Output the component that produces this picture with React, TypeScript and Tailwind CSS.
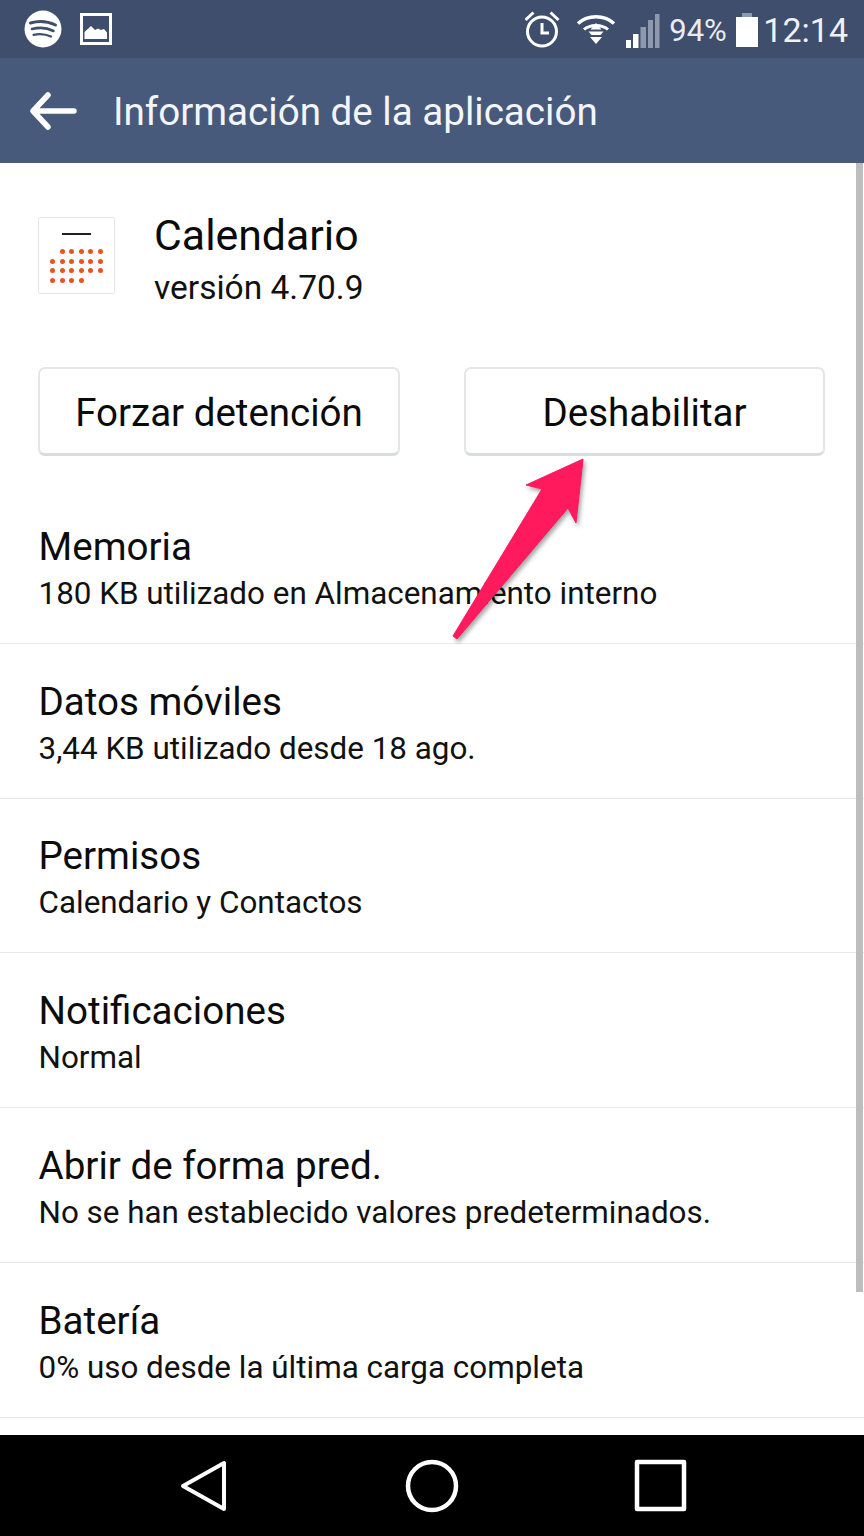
const ROBOTO = "font-['Roboto',sans-serif]";

const rows = [
  { title: "Memoria", sub: "180 KB utilizado en Almacenamiento interno" },
  { title: "Datos móviles", sub: "3,44 KB utilizado desde 18 ago." },
  { title: "Permisos", sub: "Calendario y Contactos" },
  { title: "Notificaciones", sub: "Normal" },
  { title: "Abrir de forma pred.", sub: "No se han establecido valores predeterminados." },
  { title: "Batería", sub: "0% uso desde la última carga completa" },
];

const dotRows = [
  [0, 1, 1, 1, 1, 1],
  [1, 1, 1, 1, 1, 1],
  [1, 1, 1, 1, 1, 1],
  [1, 1, 1, 1, 0, 0],
];

function SpotifyGlyph() {
  return (
    <svg width="38" height="38" viewBox="0 0 38 38">
      <circle cx="19" cy="19" r="18.5" fill="#fff" />
      <g fill="none" stroke="#3f4e6c" strokeLinecap="round">
        <path d="M6.5 13c8-2.4 17-1.8 25 2" strokeWidth="3" />
        <path d="M8 19c7-1.8 15-1.3 21.5 2" strokeWidth="2.6" />
        <path d="M9.5 24.8c6-1.3 12-.9 17.5 1.8" strokeWidth="2.2" />
      </g>
    </svg>
  );
}

function PictureGlyph() {
  return (
    <svg width="32" height="32" viewBox="0 0 32 32">
      <rect x="1.5" y="1.5" width="29" height="29" fill="none" stroke="#fff" strokeWidth="3" />
      <path d="M4.5 26v-7l6.5-6 4 4 3-1.5 3 1.5 3-1 3 3.5V26z" fill="#fff" />
    </svg>
  );
}

function AlarmGlyph() {
  return (
    <svg width="38" height="38" viewBox="0 0 38 38" fill="none" stroke="#fff">
      <circle cx="17" cy="21.5" r="14.5" strokeWidth="3" />
      <path d="M17 13v10h7" strokeWidth="3" />
      <path d="M0.5 10l8-7.5M33.5 10l-8-7.5" strokeWidth="3" />
    </svg>
  );
}

function WifiGlyph() {
  return (
    <svg width="40" height="30" viewBox="0 0 40 30" fill="none" stroke="#fff">
      <path d="M2 9.5C12 0.5 28 0.5 38 9.5" strokeWidth="3.5" />
      <path d="M8 15.5c6-5.5 18-5.5 24 0" strokeWidth="3" />
      <g fill="#fff" stroke="none">
        <path d="M20 9l5.5 6.5h-11z" />
        <path d="M12.5 17.5h15l-3 3.5h-9z" />
        <path d="M14 23h12l-6 7z" />
      </g>
    </svg>
  );
}

function SignalGlyph() {
  return (
    <svg width="34" height="34" viewBox="0 0 34 34">
      <rect x="0" y="26" width="5" height="8" fill="#fff" />
      <rect x="7" y="20" width="5.5" height="14" fill="#fff" />
      <rect x="14.5" y="13" width="5.5" height="21" fill="#8f99ad" />
      <rect x="22" y="6" width="5" height="28" fill="#8f99ad" />
      <rect x="29" y="0" width="4.5" height="34" fill="#8f99ad" />
    </svg>
  );
}

function BatteryGlyph() {
  return (
    <svg width="22" height="34" viewBox="0 0 22 34">
      <rect x="6" y="0" width="10" height="4" fill="#8f99ad" />
      <rect x="0" y="4" width="22" height="30" fill="#fff" />
    </svg>
  );
}

function CalendarIcon() {
  return (
    <div className="w-[77px] h-[77px] bg-white border border-[#e6e6e6] rounded-[2px] flex flex-col items-center shrink-0">
      <div className="w-[29px] h-[2px] bg-[#222] mt-[15px] mb-[14px]" />
      <div className="flex flex-col gap-[4.5px]">
        {dotRows.map((row, r) => (
          <div key={r} className="flex gap-[4.5px]">
            {row.map((on, c) => (
              <span key={c} className={on ? "w-[5px] h-[5px] rounded-full bg-[#e8541e]" : "w-[5px] h-[5px]"} />
            ))}
          </div>
        ))}
      </div>
    </div>
  );
}

function ActionButton({ label, className }: { label: string; className: string }) {
  return (
    <div
      className={`h-[89px] pt-[4px] rounded-[7px] border-2 border-[#e4e5e5] border-b-[3px] border-b-[#dadbdb] bg-white flex items-center justify-center text-[38.5px] text-[#0a0a0a] ${className}`}
    >
      {label}
    </div>
  );
}

export default function App() {
  return (
    <div className={`relative w-[864px] h-[1536px] overflow-hidden bg-white flex flex-col ${ROBOTO}`}>
      <div className="h-[58px] bg-[#3f4e6c] flex items-center pl-[24px] pr-[16px] text-white shrink-0">
        <SpotifyGlyph />
        <div className="ml-[18px]">
          <PictureGlyph />
        </div>
        <div className="ml-auto flex items-center">
          <AlarmGlyph />
          <div className="ml-[13px]">
            <WifiGlyph />
          </div>
          <div className="ml-[10px] mt-[4px]">
            <SignalGlyph />
          </div>
          <span className="ml-[9px] text-[31px] leading-none text-[#e9ebf0] mt-[2px]">94%</span>
          <div className="ml-[9.5px] mt-[2px]">
            <BatteryGlyph />
          </div>
          <span className="ml-[5px] text-[34px] leading-none text-[#f1f2f5] mt-[2px]">12:14</span>
        </div>
      </div>

      <div className="h-[105px] bg-[#475a7b] flex items-center pl-[30px] text-white shrink-0">
        <svg width="47" height="38" viewBox="0 0 47 38" fill="none" stroke="#fff" strokeWidth="5.5" strokeLinecap="round" strokeLinejoin="round">
          <path d="M44 19H4M18 3L3 19l15 16" />
        </svg>
        <span className="ml-[36px] mt-[3px] text-[38.6px] leading-none text-[#f4f5f8]">Información de la aplicación</span>
      </div>

      <div className="relative flex-1 min-h-0 bg-white overflow-hidden">
        <div className="flex items-start px-[38px] pt-[54px]">
          <CalendarIcon />
          <div className="ml-[39px] flex flex-col mt-[-5px]">
            <span className="text-[42.8px] leading-[46px] text-[#0a0a0a]">Calendario</span>
            <span className="text-[33.5px] leading-[40px] mt-[10px] text-[#111]">versión 4.70.9</span>
          </div>
        </div>

        <div className="flex gap-[64px] pl-[38px] pr-[39px] mt-[59px]">
          <ActionButton label="Forzar detención" className="w-[362px]" />
          <ActionButton label="Deshabilitar" className="w-[361px]" />
        </div>

        <div className="mt-[33px] flex flex-col">
          {rows.map((row) => (
            <div key={row.title} className="h-[154.8px] pl-[38.5px] border-b border-[#e8e8e8] flex flex-col justify-end pb-[31px]">
              <span className="text-[38.6px] leading-[42px] text-[#0c0c0c]">{row.title}</span>
              <span className="text-[31.4px] leading-[36px] mt-[8px] text-[#111]">{row.sub}</span>
            </div>
          ))}
        </div>

        {/* scroll thumb along the right edge */}
        <div className="absolute right-[1px] top-0 w-[7px] h-[1129px] bg-[#bdbdbd]" />
      </div>

      <div className="h-[101px] bg-black flex items-center shrink-0 pl-[178px]">
        <svg width="52" height="52" viewBox="0 0 52 52" fill="none" stroke="#fff" strokeWidth="4" strokeLinejoin="round">
          <path d="M46 3v46L5 26z" />
        </svg>
        <svg className="ml-[175px]" width="54" height="54" viewBox="0 0 54 54" fill="none" stroke="#fff" strokeWidth="4.5">
          <circle cx="27" cy="27" r="24" />
        </svg>
        <svg className="ml-[175px]" width="54" height="54" viewBox="0 0 54 54" fill="none" stroke="#fff" strokeWidth="4.5" strokeLinejoin="round">
          <rect x="3" y="3" width="47" height="47" />
        </svg>
      </div>

      {/* annotation arrow pointing at the disable button */}
      <svg className="absolute left-[440px] top-[450px] pointer-events-none [filter:drop-shadow(2px_3px_2px_rgba(0,0,0,0.35))]" width="160" height="200" viewBox="440 450 160 200">
        <path d="M583 459L526 485 542 489 453 636 457 639 568 508 576 523z" fill="#ff1a5e" stroke="#ff1a5e" strokeWidth="1" strokeLinejoin="round" />
      </svg>
    </div>
  );
}
